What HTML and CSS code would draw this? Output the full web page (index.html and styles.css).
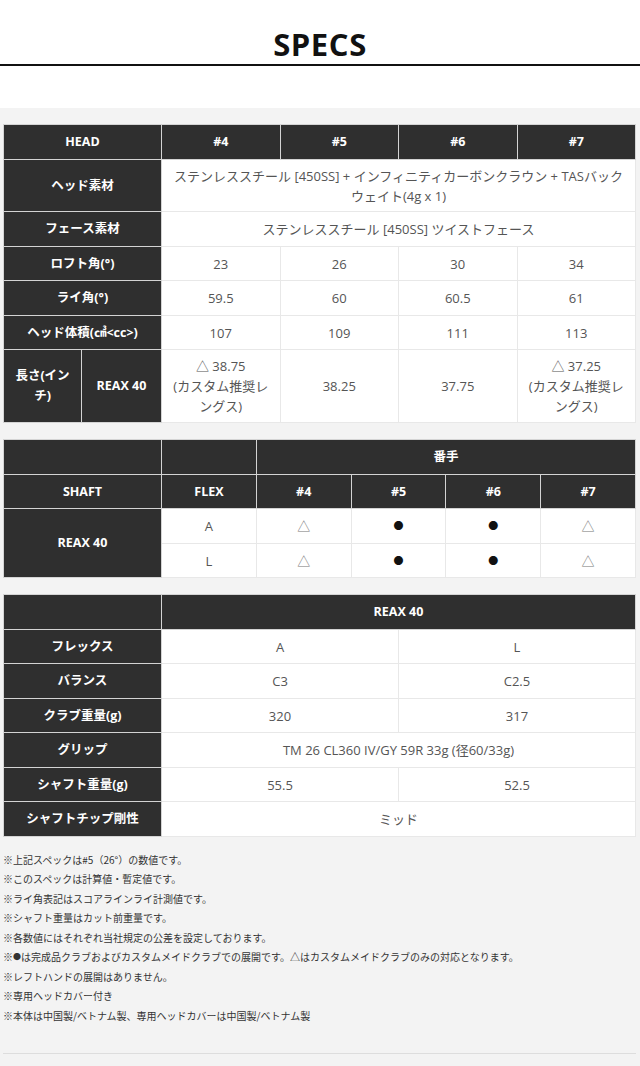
FILE: index.html
```html
<!DOCTYPE html>
<html lang="ja">
<head>
<meta charset="utf-8">
<title>SPECS</title>
<link rel="stylesheet" href="styles.css">
</head>
<body>
<header class="page-head">
  <h1 class="title">SPECS</h1>
</header>
<main class="specs">
  <table class="spec-table">
    <colgroup><col class="c-label"><col><col><col><col></colgroup>
    <thead>
      <tr><th>HEAD</th><th>#4</th><th>#5</th><th>#6</th><th>#7</th></tr>
    </thead>
    <tbody>
      <tr><th>ヘッド素材</th><td colspan="4">ステンレススチール [450SS] + インフィニティカーボンクラウン + TASバック<br>ウェイト(4g x 1)</td></tr>
      <tr><th>フェース素材</th><td colspan="4">ステンレススチール [450SS] ツイストフェース</td></tr>
      <tr><th>ロフト角(°)</th><td>23</td><td>26</td><td>30</td><td>34</td></tr>
      <tr><th>ライ角(°)</th><td>59.5</td><td>60</td><td>60.5</td><td>61</td></tr>
      <tr><th>ヘッド体積(㎤&lt;cc&gt;)</th><td>107</td><td>109</td><td>111</td><td>113</td></tr>
      <tr>
        <th class="split-cell">
          <div class="split">
            <span class="split-a">長さ(イン<br>チ)</span>
            <span class="split-b">REAX 40</span>
          </div>
        </th>
        <td>△ 38.75<br>(カスタム推奨レ<br>ングス)</td><td>38.25</td><td>37.75</td><td>△ 37.25<br>(カスタム推奨レ<br>ングス)</td>
      </tr>
    </tbody>
  </table>

  <table class="spec-table">
    <colgroup><col class="c-label"><col><col><col><col><col></colgroup>
    <thead>
      <tr><th></th><th></th><th colspan="4">番手</th></tr>
      <tr><th>SHAFT</th><th>FLEX</th><th>#4</th><th>#5</th><th>#6</th><th>#7</th></tr>
    </thead>
    <tbody>
      <tr><th rowspan="2">REAX 40</th><td>A</td><td class="tri">△</td><td class="dot">●</td><td class="dot">●</td><td class="tri">△</td></tr>
      <tr><td>L</td><td class="tri">△</td><td class="dot">●</td><td class="dot">●</td><td class="tri">△</td></tr>
    </tbody>
  </table>

  <table class="spec-table">
    <colgroup><col class="c-label"><col><col></colgroup>
    <thead>
      <tr><th></th><th colspan="2">REAX 40</th></tr>
    </thead>
    <tbody>
      <tr><th>フレックス</th><td>A</td><td>L</td></tr>
      <tr><th>バランス</th><td>C3</td><td>C2.5</td></tr>
      <tr><th>クラブ重量(g)</th><td>320</td><td>317</td></tr>
      <tr><th>グリップ</th><td colspan="2">TM 26 CL360 IV/GY 59R 33g (径60/33g)</td></tr>
      <tr><th>シャフト重量(g)</th><td>55.5</td><td>52.5</td></tr>
      <tr><th>シャフトチップ剛性</th><td colspan="2">ミッド</td></tr>
    </tbody>
  </table>

  <ul class="notes">
    <li>※上記スペックは#5（26°）の数値です。</li>
    <li>※このスペックは計算値・暫定値です。</li>
    <li>※ライ角表記はスコアラインライ計測値です。</li>
    <li>※シャフト重量はカット前重量です。</li>
    <li>※各数値にはそれぞれ当社規定の公差を設定しております。</li>
    <li>※<span class="small-dot">●</span>は完成品クラブおよびカスタムメイドクラブでの展開です。△はカスタムメイドクラブのみの対応となります。</li>
    <li>※レフトハンドの展開はありません。</li>
    <li>※専用ヘッドカバー付き</li>
    <li>※本体は中国製/ベトナム製、専用ヘッドカバーは中国製/ベトナム製</li>
  </ul>
  <div class="end-rule"></div>
</main>
</body>
</html>
```

FILE: styles.css
```css
html, body {
  margin: 0;
  padding: 0;
}
body {
  background: #f3f3f3;
  font-family: "Open Sans", "Noto Sans CJK JP", sans-serif;
  color: #555;
}
.page-head {
  background: #fff;
  height: 108px;
  padding-top: 24px;
  box-sizing: border-box;
}
.title {
  margin: 0;
  font-size: 31px;
  line-height: 40px;
  font-weight: 700;
  color: #111;
  text-align: center;
  letter-spacing: 0.6px;
  border-bottom: 2px solid #111;
}
.specs {
  padding: 16px 4px 10px 3px;
}
.spec-table {
  width: 633px;
  table-layout: fixed;
  border-collapse: collapse;
  margin-bottom: 16px;
  background: #fff;
}
.spec-table tr {
  height: 34.5px;
}
.c-label {
  width: 158px;
}
.spec-table th,
.spec-table td {
  padding: 6px 4px 5.5px;
  line-height: 20px;
  text-align: center;
  vertical-align: middle;
}
.spec-table th {
  background: #2f2f2f;
  color: #fff;
  font-size: 12.5px;
  font-weight: 700;
  border: 1px solid #d4d4d4;
}
.spec-table td {
  font-size: 13px;
  color: #555;
  border: 1px solid #e8e8e8;
}
.spec-table td.tri {
  color: #777;
}
.spec-table td.dot {
  color: #111;
  font-size: 10px;
}
.spec-table th.split-cell {
  padding: 0;
}
.split {
  display: grid;
  grid-template-columns: 78px 1fr;
  min-height: 72px;
}
.split-a,
.split-b {
  display: flex;
  align-items: center;
  justify-content: center;
  line-height: 20px;
}
.split-a {
  border-right: 1px solid #d4d4d4;
}
.notes {
  list-style: none;
  margin: -3px 0 0;
  padding: 0;
  font-size: 10px;
  line-height: 19.5px;
  color: #333;
  font-family: "Noto Sans CJK JP", sans-serif;
}
.small-dot {
  font-size: 8px;
  vertical-align: 1px;
}
.end-rule {
  margin-top: 28px;
  border-top: 1px solid #ddd;
}
```
